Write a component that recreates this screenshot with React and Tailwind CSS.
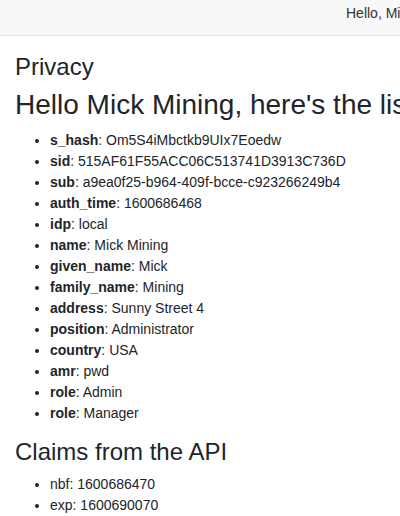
import React from 'react';

const claims = [
  ["s_hash", "Om5S4iMbctkb9UIx7Eoedw"],
  ["sid", "515AF61F55ACC06C513741D3913C736D"],
  ["sub", "a9ea0f25-b964-409f-bcce-c923266249b4"],
  ["auth_time", "1600686468"],
  ["idp", "local"],
  ["name", "Mick Mining"],
  ["given_name", "Mick"],
  ["family_name", "Mining"],
  ["address", "Sunny Street 4"],
  ["position", "Administrator"],
  ["country", "USA"],
  ["amr", "pwd"],
  ["role", "Admin"],
  ["role", "Manager"]
];

const apiClaims = ["nbf: 1600686470", "exp: 1600690070"];

export default function App() {
  return (
    <div className="w-[400px] h-[516px] overflow-hidden bg-white text-[#212529] text-[14px] leading-[21px] font-['Liberation_Sans',Arial,sans-serif]">
      <header className="h-[36px] bg-[#f8f8f8] border-b border-[#e2e2e2] flex pl-[346px] pt-[3px] whitespace-nowrap text-[#333]">
        Hello, Mick Mining
      </header>

      <main className="px-[15px] pt-[16px] whitespace-nowrap">
        <h3 className="text-[24px] leading-[29px] mb-[7px]">Privacy</h3>
        <h2 className="text-[28px] leading-[34px] mb-[8px]">
          Hello Mick Mining, here's the list of claims
        </h2>
        <ul className="list-disc pl-[35px] mb-[13px]">
          {claims.map(([key, value], index) => (
            <li key={index}>
              <strong className="font-bold">{key}</strong>: {value}
            </li>
          ))}
        </ul>

        <h3 className="text-[24px] leading-[29px] mb-[8px]">Claims from the API</h3>
        <ul className="list-disc pl-[35px]">
          {apiClaims.map((c) => (
            <li key={c}>{c}</li>
          ))}
        </ul>
      </main>
    </div>
  );
}
